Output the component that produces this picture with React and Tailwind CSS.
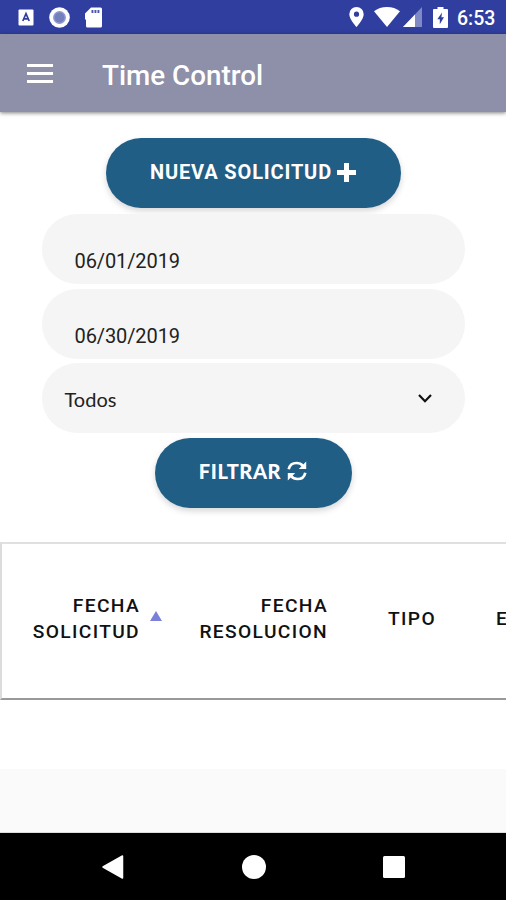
function PlusIcon() {
  return (
    <svg className="ml-[5px] w-[19px] h-[19px]" viewBox="0 0 19 19">
      <path d="M7 0h5v7h7v5h-7v7H7v-7H0V7h7z" fill="#fff" />
    </svg>
  )
}

function RefreshIcon() {
  return (
    <svg className="ml-[6px] w-5 h-5" viewBox="0 0 20 20">
      <path d="M1.700 8.300C2.500 4.300 5.800 2 9.600 2c2.500 0 4.700 1 6.300 2.800M18.300 11.700C17.500 15.700 14.200 18 10.400 18c-2.500 0-4.700-1-6.300-2.800" fill="none" stroke="#fff" strokeWidth="2.700" />
      <path d="M19.200 .6V8h-7.400zM.8 19.400V12h7.400z" fill="#fff" />
    </svg>
  )
}

function StatusBar() {
  return (
    <div className="h-[34px] bg-[#303f9f] text-white flex items-center justify-between pl-[18px] pr-[11px]">
      <div className="flex items-center">
        <svg className="w-4 h-[17px]" viewBox="0 0 16 17">
          <rect x="0.5" y="0.5" width="15" height="16" rx="1" fill="#fff" />
          <path d="M4.8 12 8 4.6 11.2 12M6 9.8h4" fill="none" stroke="#303f9f" strokeWidth="1.7" />
        </svg>
        <svg className="ml-[15px] w-[21px] h-[21px]" viewBox="0 0 21 21">
          <circle cx="10.5" cy="10.5" r="10.3" fill="#fff" />
          <circle cx="10.5" cy="10.5" r="5.7" fill="#7480be" stroke="#8f99cf" strokeWidth="1.5" />
        </svg>
        <svg className="ml-[15px] w-[17px] h-[21px]" viewBox="0 0 17 21">
          <path d="M6 .5h9.5A1.5 1.5 0 0 1 17 2v17a1.5 1.5 0 0 1-1.5 1.500h-13A1.5 1.5 0 0 1 1 19V13L0 12V6.5z" fill="#fff" />
          <path d="M6.500 3h1.900v3H6.500zM9.500 3h1.900v3H9.500zM12.500 3h1.900v3h-1.900z" fill="#4a57aa" />
        </svg>
      </div>
      <div className="flex items-center">
        <svg className="w-[15px] h-[20px]" viewBox="0 0 15 20">
          <path d="M7.5 0A7.2 7.2 0 0 0 .3 7.2C.3 12.4 7.5 20 7.5 20s7.2-7.6 7.2-12.8A7.2 7.2 0 0 0 7.5 0m0 9.8a2.6 2.6 0 1 1 0-5.2 2.6 2.6 0 0 1 0 5.2" fill="#fff" />
        </svg>
        <svg className="ml-[10px] w-[26px] h-[20px]" viewBox="0 0 26 20">
          <path d="M13 20 0 4.2C3.500 1.500 8 0 13 0s9.500 1.500 13 4.200z" fill="#fff" />
        </svg>
        <svg className="ml-[3px] w-[19px] h-[20px]" viewBox="0 0 19 20">
          <path d="M0 20 19 0v20z" fill="#7f89c6" />
          <path d="M0 20 12 7.400V20z" fill="#fff" />
        </svg>
        <svg className="ml-[11px] w-[15px] h-[21px]" viewBox="0 0 15 21">
          <path d="M4.500 0h6v2H14q1 0 1 1v17q0 1-1 1H1q-1 0-1-1V3q0-1 1-1h3.500z" fill="#fff" />
          <path d="M9 5.500 4.300 12.200h2.500v5l4.200-7H8.400z" fill="#303f9f" />
        </svg>
        <span className="ml-[9px] w-[38px] whitespace-nowrap text-[19.5px] leading-5 font-medium mt-[3px]">6:53</span>
      </div>
    </div>
  )
}

function AppBar() {
  return (
    <header className="relative h-[78px] bg-[#8e8fa8] text-white flex items-center pl-[27px] shadow-[0_1px_4px_rgba(0,0,0,0.5)]">
      <button className="flex w-[26px] flex-col gap-[5px] mt-px" aria-label="Menu">
        <span className="h-[3px] w-full bg-white" />
        <span className="h-[3px] w-full bg-white" />
        <span className="h-[3px] w-full bg-white" />
      </button>
      <h1 className="ml-[49px] mt-[5px] text-[27.8px] leading-8 font-medium whitespace-nowrap">Time Control</h1>
    </header>
  )
}

function DateField({ value }) {
  return (
    <div className="h-[70px] w-[423px] rounded-full bg-[#f5f5f5] flex items-end pl-[33px] pb-[11px] text-[20px] leading-6 tracking-[-0.1px] text-[#222]">
      {value}
    </div>
  )
}

function PillButton({ className, children }) {
  return (
    <button className={`h-[70px] rounded-full bg-[#205e86] text-white flex items-center justify-center shadow-[0_3px_6px_rgba(0,0,0,0.16)] ${className}`}>
      {children}
    </button>
  )
}

function RequestsTable() {
  return (
    <div className="mt-[34px] h-[158px] w-full overflow-hidden border-t-2 border-l-2 border-b-2 border-t-[#e0e0e0] border-l-[#dcdcdc] border-b-[#999] bg-white">
      <div className="flex h-full w-[600px] items-center pb-[4px] text-[19.2px] leading-[26px] font-medium tracking-[1.35px] text-[#111]">
        <div className="w-[138px] text-right">FECHA<br />SOLICITUD</div>
        <svg className="ml-[10px] mb-[7px] w-3 h-[10px]" viewBox="0 0 12 10">
          <path d="M6 0 12 10H0z" fill="#7b80d8" />
        </svg>
        <div className="w-[166px] text-right">FECHA<br />RESOLUCION</div>
        <div className="ml-[60px] w-[108px]">TIPO</div>
        <div>ESTADO</div>
      </div>
    </div>
  )
}

function NavBar() {
  return (
    <nav className="h-[67px] bg-black flex items-center">
      <svg className="ml-[102px] w-[22px] h-6" viewBox="0 0 22 24">
        <path d="M1 12 20.500 1v22z" fill="#fff" stroke="#fff" strokeWidth="1.500" strokeLinejoin="round" />
      </svg>
      <span className="ml-[118px] size-6 rounded-full bg-white" />
      <span className="ml-[117px] w-[22px] h-[22px] rounded-[1.5px] bg-white" />
    </nav>
  )
}

export default function App() {
  return (
    <div className="h-[900px] w-[506px] overflow-hidden bg-white flex flex-col font-['Roboto',sans-serif]">
      <StatusBar />
      <AppBar />
      <main className="h-[657px] flex flex-col items-center pt-[26px]">
        <PillButton className="w-[295px] pb-[2px] text-[20px] font-bold tracking-[0.85px]">
          NUEVA SOLICITUD
          <PlusIcon />
        </PillButton>
        <div className="mt-[6px] flex flex-col gap-[5px]">
          <DateField value="06/01/2019" />
          <DateField value="06/30/2019" />
          <div className="-mt-px h-[70px] w-[423px] rounded-full bg-[#f5f5f5] flex items-center justify-between pl-[23px] pr-[33px] text-[20px] text-[#222] font-['Lato',sans-serif]">
            <span className="mt-px">Todos</span>
            <svg className="w-[14px] h-[9px]" viewBox="0 0 14 9">
              <path d="M1 1 7 7.200 13 1" fill="none" stroke="#111" strokeWidth="2.200" />
            </svg>
          </div>
        </div>
        <PillButton className="mt-[5px] w-[197px] pb-[4px] text-[20px] font-black tracking-[0.6px] font-['Lato',sans-serif]">
          FILTRAR
          <RefreshIcon />
        </PillButton>
        <RequestsTable />
      </main>
      <div className="h-[64px] bg-[#fafafa] border-b border-[#ddd]" />
      <NavBar />
    </div>
  )
}
